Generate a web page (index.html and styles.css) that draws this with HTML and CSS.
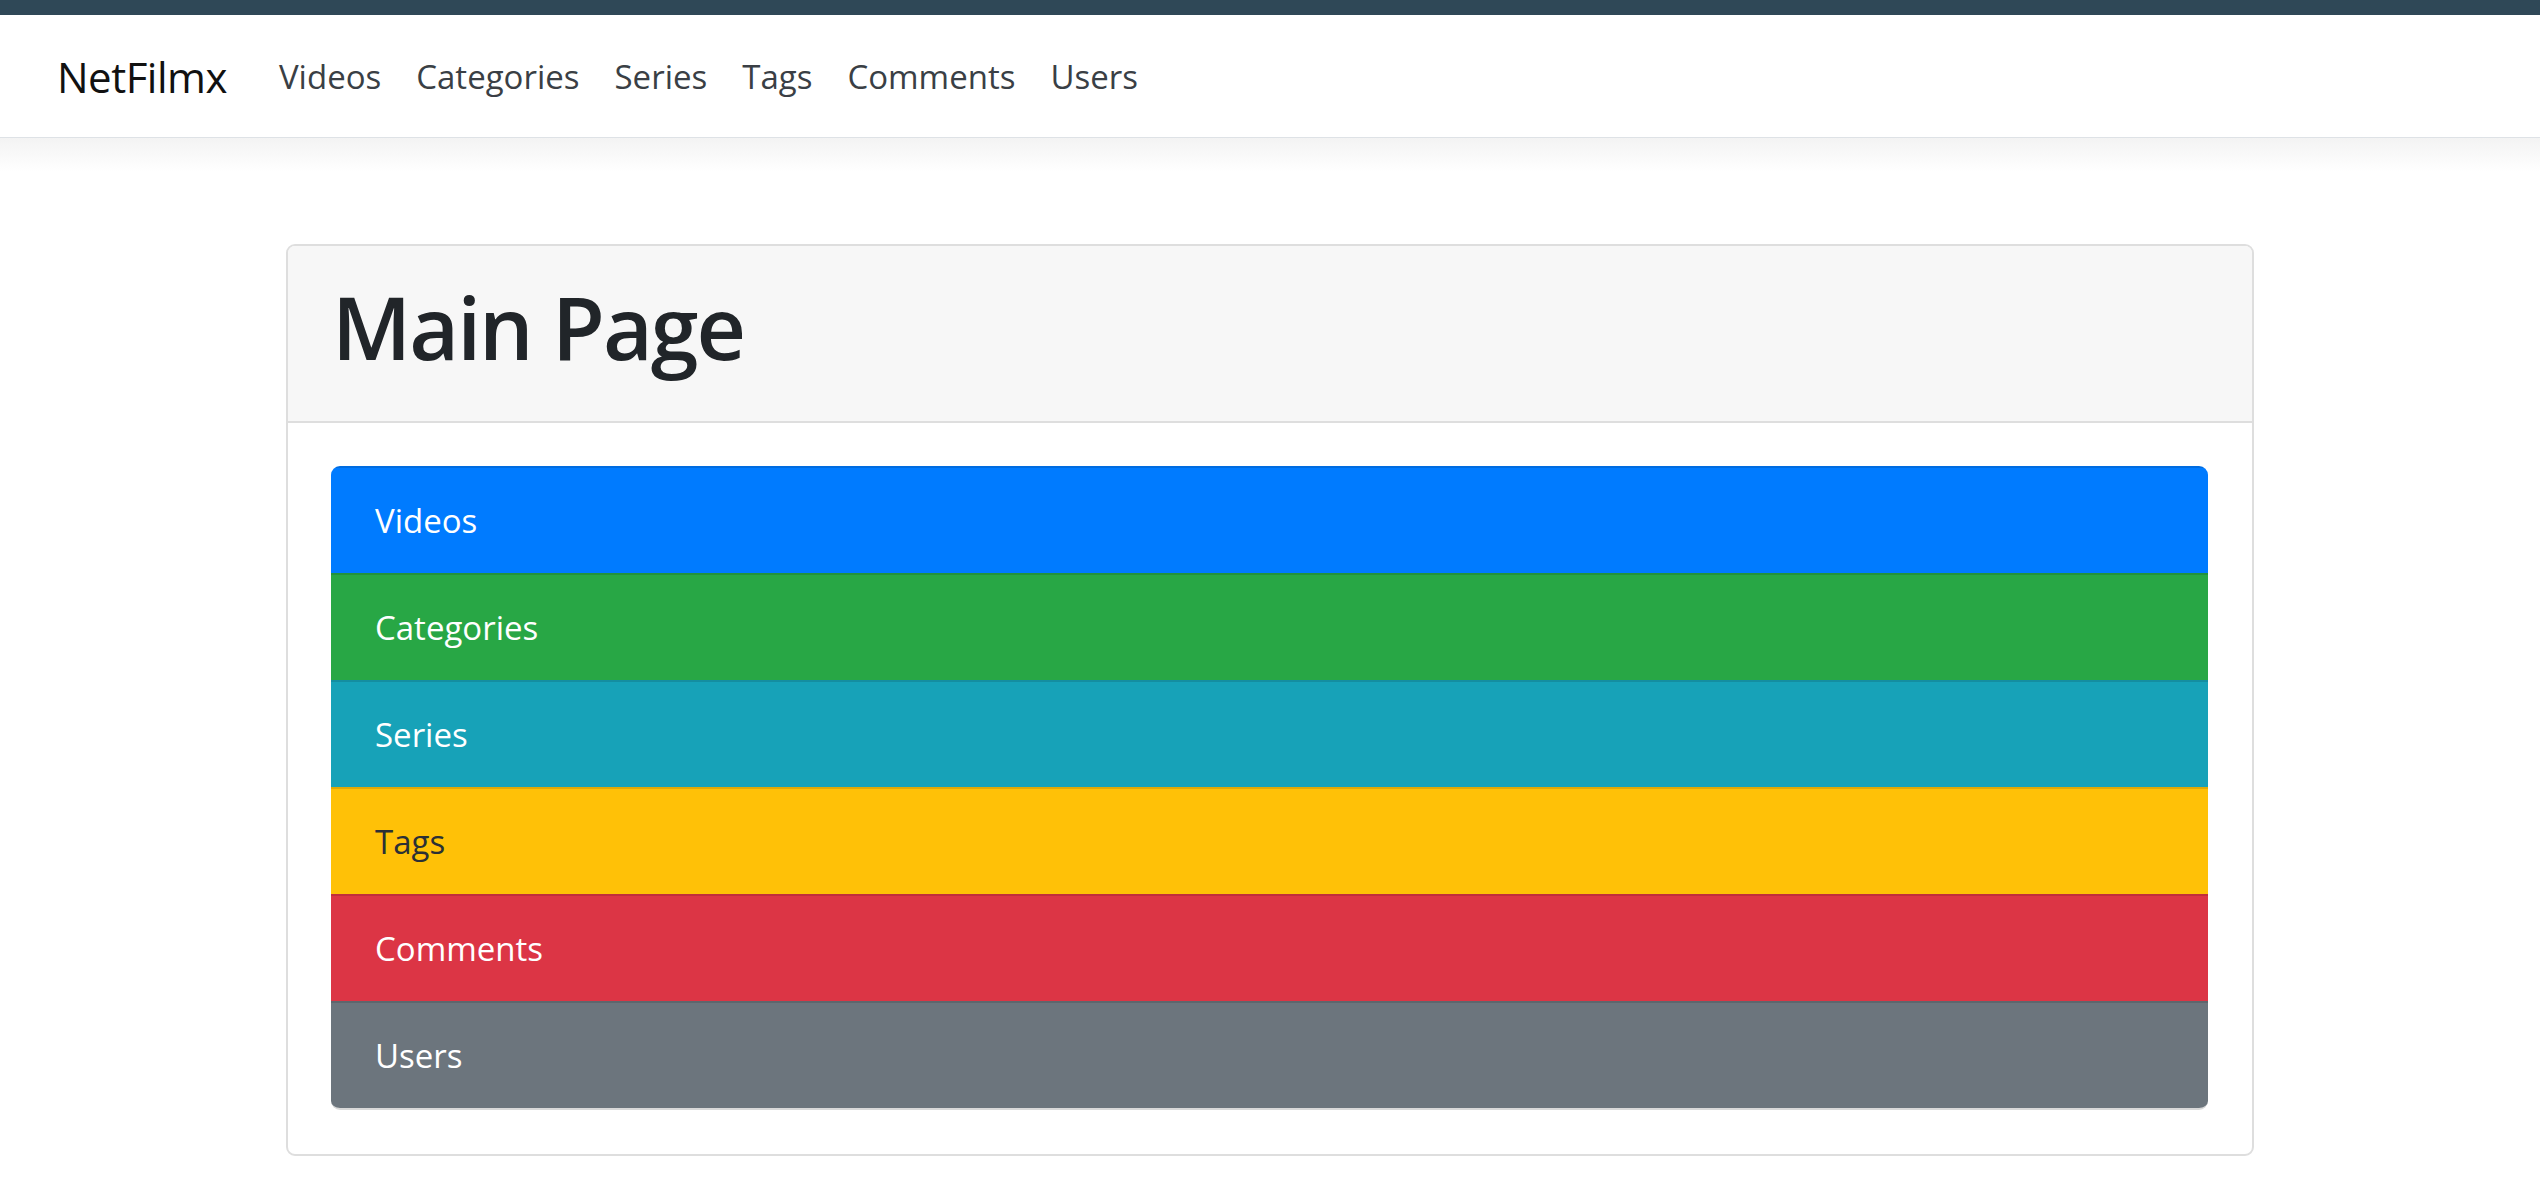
FILE: index.html
```html
<!DOCTYPE html>
<html lang="en">
<head>
<meta charset="utf-8">
<title>NetFilmx</title>
<link rel="stylesheet" href="styles.css">
</head>
<body>
<div class="topbar"></div>
<nav class="navbar">
  <a class="brand" href="#">NetFilmx</a>
  <ul class="nav">
    <li><a class="nav-link" href="#">Videos</a></li>
    <li><a class="nav-link" href="#">Categories</a></li>
    <li><a class="nav-link" href="#">Series</a></li>
    <li><a class="nav-link" href="#">Tags</a></li>
    <li><a class="nav-link" href="#">Comments</a></li>
    <li><a class="nav-link" href="#">Users</a></li>
  </ul>
</nav>
<div class="nav-shadow"></div>
<main class="main">
  <section class="card">
    <header class="card-header">
      <h1 class="title">Main Page</h1>
    </header>
    <div class="card-body">
      <div class="list-group">
        <a class="item item-primary" href="#">Videos</a>
        <a class="item item-success" href="#">Categories</a>
        <a class="item item-info" href="#">Series</a>
        <a class="item item-warning" href="#">Tags</a>
        <a class="item item-danger" href="#">Comments</a>
        <a class="item item-secondary" href="#">Users</a>
      </div>
    </div>
  </section>
</main>
</body>
</html>
```
FILE: styles.css
```css
html, body {
  margin: 0;
  padding: 0;
  background: #fff;
}
body {
  font-family: "Open Sans", "Noto Sans", sans-serif;
  color: #212529;
}
a { text-decoration: none; }

.topbar {
  height: 15px;
  background: #2f4857;
}

.navbar {
  height: 121px;
  box-sizing: content-box;
  border-bottom: 2px solid #dee2e6;
  display: flex;
  align-items: center;
  padding-left: 57px;
  padding-top: 1px;
  margin-bottom: -1px;
  background: #fff;
}
.brand {
  font-size: 42px;
  color: #111;
  letter-spacing: -0.5px;
  margin-right: 52px;
}
.nav {
  list-style: none;
  margin: 0;
  padding: 0;
  display: flex;
  gap: 35px;
}
.nav-link {
  font-size: 33px;
  color: #3a3f45;
}

.nav-shadow {
  height: 34px;
  background: linear-gradient(to bottom, #f3f3f3, #ffffff);
}

.main {
  padding-top: 72px;
}
.card {
  max-width: 1968px;
  margin: 0 auto;
  border: 2px solid #dedede;
  border-radius: 9px;
  box-sizing: border-box;
  overflow: hidden;
}
.card-header {
  background: #f7f7f7;
  border-bottom: 2px solid #dedede;
  padding: 28px 44px 24px 44px;
}
.title {
  margin: 0 0 17px 0;
  font-size: 86px;
  line-height: 106px;
  font-weight: 600;
  letter-spacing: -2px;
  color: #212529;
}
.card-body {
  padding: 43px 44px 44px 43px;
}
.list-group {
  display: flex;
  flex-direction: column;
  border-radius: 9px;
  overflow: hidden;
  border-bottom: 2px solid rgba(0,0,0,0.15);
}
.item {
  display: block;
  padding: 26px 44px;
  line-height: 53px;
  font-size: 33px;
  color: #fff;
  border-top: 2px solid rgba(0,0,0,0.12);
}
.item-primary { background: #007bff; }
.item-success { background: #28a745; }
.item-info { background: #17a2b8; }
.item-warning { background: #ffc107; color: #2b3035; }
.item-danger { background: #dc3545; }
.item-secondary { background: #6c757d; }
```
